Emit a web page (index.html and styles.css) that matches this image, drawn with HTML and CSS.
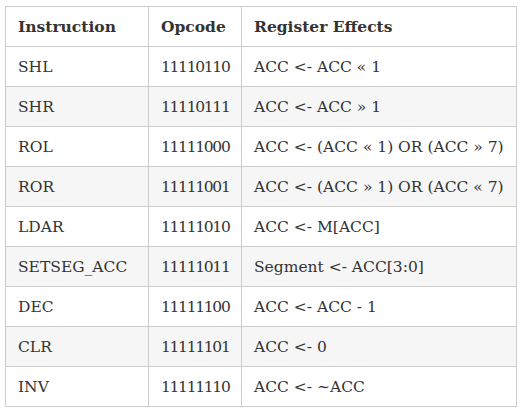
FILE: index.html
```html
<!DOCTYPE html>
<html>
<head>
<meta charset="utf-8">
<link rel="stylesheet" href="styles.css">
</head>
<body>
<table class="ops">
  <colgroup><col class="c1"><col class="c2"><col class="c3"></colgroup>
  <thead>
    <tr><th>Instruction</th><th>Opcode</th><th>Register Effects</th></tr>
  </thead>
  <tbody>
    <tr><td>SHL</td><td class="code">11110110</td><td>ACC &lt;- ACC « 1</td></tr>
    <tr><td>SHR</td><td class="code">11110111</td><td>ACC &lt;- ACC » 1</td></tr>
    <tr><td>ROL</td><td class="code">11111000</td><td>ACC &lt;- (ACC « 1) OR (ACC » 7)</td></tr>
    <tr><td>ROR</td><td class="code">11111001</td><td>ACC &lt;- (ACC » 1) OR (ACC « 7)</td></tr>
    <tr><td>LDAR</td><td class="code">11111010</td><td>ACC &lt;- M[ACC]</td></tr>
    <tr><td>SETSEG_ACC</td><td class="code">11111011</td><td>Segment &lt;- ACC[3:0]</td></tr>
    <tr><td>DEC</td><td class="code">11111100</td><td>ACC &lt;- ACC - 1</td></tr>
    <tr><td>CLR</td><td class="code">11111101</td><td>ACC &lt;- 0</td></tr>
    <tr><td>INV</td><td class="code">11111110</td><td>ACC &lt;- ~ACC</td></tr>
  </tbody>
</table>
</body>
</html>
```
FILE: styles.css
```css
html, body {
  margin: 0;
  background: #ffffff;
}
body {
  padding: 6px 5px;
  font-family: "DejaVu Serif", "Liberation Serif", serif;
  color: #333333;
}
.ops {
  border-collapse: collapse;
  table-layout: fixed;
  width: 511px;
  font-size: 15.5px;
}
.c1 { width: 143px; }
.c2 { width: 93px; }
.c3 { width: 275px; }
.ops th, .ops td {
  border: 1px solid #cccccc;
  height: 40px;
  padding: 0 12px;
  text-align: left;
  white-space: nowrap;
  box-sizing: border-box;
}
.ops th {
  font-weight: bold;
}
.ops .code {
  letter-spacing: -1.3px;
}
.ops tbody tr:nth-child(even) td {
  background: #f6f6f6;
}
```
